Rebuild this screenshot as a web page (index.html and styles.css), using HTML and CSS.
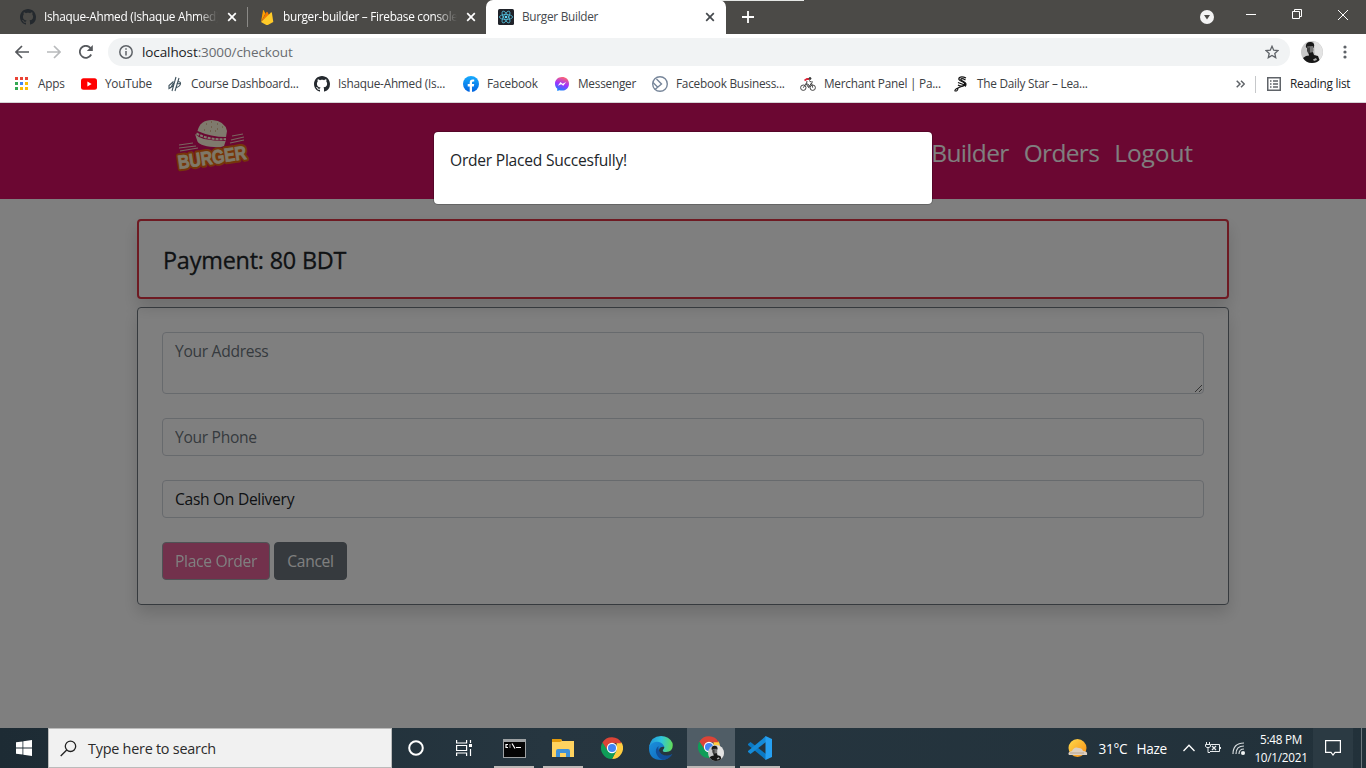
FILE: index.html
```html
<!DOCTYPE html>
<html lang="en">
<head>
<meta charset="utf-8">
<title>Burger Builder</title>
<link rel="stylesheet" href="styles.css">
</head>
<body>
<svg class="defs" width="0" height="0">
  <defs>
    <symbol id="github" viewBox="0 0 16 16"><path d="M8 0C3.58 0 0 3.58 0 8c0 3.54 2.29 6.53 5.47 7.59.4.07.55-.17.55-.38 0-.19-.01-.82-.01-1.49-2.01.37-2.53-.49-2.69-.94-.09-.23-.48-.94-.82-1.13-.28-.15-.68-.52-.01-.53.63-.01 1.08.58 1.23.82.72 1.21 1.87.87 2.33.66.07-.52.28-.87.51-1.07-1.78-.2-3.64-.89-3.64-3.95 0-.87.31-1.59.82-2.15-.08-.2-.36-1.02.08-2.12 0 0 .67-.21 2.2.82.64-.18 1.32-.27 2-.27s1.36.09 2 .27c1.53-1.04 2.2-.82 2.2-.82.44 1.1.16 1.92.08 2.12.51.56.82 1.27.82 2.15 0 3.07-1.87 3.75-3.65 3.95.29.25.54.73.54 1.48 0 1.07-.01 1.93-.01 2.2 0 .21.15.46.55.38A8.01 8.01 0 0 0 16 8c0-4.42-3.58-8-8-8z"/></symbol>
    <symbol id="close" viewBox="0 0 10 10"><path d="M1.2 1.2l7.6 7.6M8.8 1.2l-7.6 7.6" fill="none" stroke="currentColor" stroke-width="1.7"/></symbol>
    <symbol id="chrome" viewBox="0 0 24 24">
      <path d="M22.4 6A12 12 0 0 1 12 24l4.8-9.500L17 7.200V6z" fill="#ffcd40"/>
      <path d="M1.600 6A12 12 0 0 0 12 24l5-9-9-1z" fill="#0f9d58"/>
      <path d="M1.600 6A12 12 0 0 1 22.400 6.700H12L7.500 15z" fill="#db4437"/>
      <circle cx="12" cy="12" r="5.600" fill="#fff"/><circle cx="12" cy="12" r="4.400" fill="#4285f4"/>
    </symbol>
    <symbol id="portrait" viewBox="0 0 22 22">
      <circle cx="11" cy="11" r="11" fill="#c9c9c9"/><path d="M13 .2a11 11 0 0 1 5 19L14 13z" fill="#e3e3e3"/>
      <path d="M4.800 5.500Q5 1 9 1q4-.4 4.200 3.500L12.500 7H5.500z" fill="#191919"/><path d="M6 5.500l6-.5q1 4 0 6l-3 2Q6 10 6 5.500z" fill="#777"/>
      <path d="M6 6q2 1 3 0v6l2 1-3 1-2-4z" fill="#3e3e3e"/>
      <path d="M8 12l4-1 1 3 4 1 1.500 4q-2.500 3-7.500 3-6 0-9-5l3-2 3-.5z" fill="#171717"/><path d="M12 18.500l3-1.500 1 2-3 1z" fill="#aaa"/>
    </symbol>
    <linearGradient id="fb" x1="0" y1="0" x2="0" y2="1"><stop stop-color="#18acfe"/><stop offset="1" stop-color="#0163e0"/></linearGradient>
    <linearGradient id="ms" x1=".3" y1="1" x2=".6" y2="0"><stop stop-color="#0f87ff"/><stop offset=".5" stop-color="#a033ff"/><stop offset="1" stop-color="#ff6570"/></linearGradient>
    <linearGradient id="edge-top" x1="0" y1=".4" x2="1" y2=".5"><stop stop-color="#2196dc"/><stop offset=".5" stop-color="#2fc5dc"/><stop offset="1" stop-color="#62dc58"/></linearGradient>
    <linearGradient id="edge-low" x1="0" y1="0" x2="1" y2="1"><stop stop-color="#1c91dc"/><stop offset="1" stop-color="#0c62b8"/></linearGradient>
    <linearGradient id="sun" x1="0" y1="0" x2="1" y2="1"><stop stop-color="#ffdb4d"/><stop offset="1" stop-color="#f78c12"/></linearGradient>
  </defs>
</svg>

<div class="browser">
  <div class="tabstrip">
    <div class="tab tab-first">
      <svg class="i16" fill="#24292e"><use href="#github"/></svg>
      <span class="tab-title faded">Ishaque-Ahmed (Ishaque Ahmed)</span>
      <svg class="i10"><use href="#close"/></svg>
    </div>
    <div class="tab tab-second">
      <svg class="i16" viewBox="0 0 16 16"><path d="M2 13L4 1.400q.3-.8.8 0L6.500 4.500z" fill="#ffa000"/><path d="M2 13L7.500 3q.5-.7 1 0L10 6z" fill="#f57c00"/><path d="M2 13L12 3.500q.7-.5.9.3L14.300 13 8.800 16q-.8.300-1.500 0z" fill="#ffca28"/></svg>
      <span class="tab-title faded">burger-builder – Firebase console</span>
      <svg class="i10"><use href="#close"/></svg>
    </div>
    <div class="tab tab-active">
      <svg class="i16" viewBox="0 0 16 16"><rect width="16" height="16" rx="1.500" fill="#20232a"/><g fill="none" stroke="#53c1de" stroke-width=".8"><ellipse cx="8" cy="8" rx="6.600" ry="2.500"/><ellipse cx="8" cy="8" rx="6.600" ry="2.500" transform="rotate(60 8 8)"/><ellipse cx="8" cy="8" rx="6.600" ry="2.500" transform="rotate(120 8 8)"/></g><circle cx="8" cy="8" r="1.300" fill="#61dafb"/></svg>
      <span class="tab-title">Burger Builder</span>
      <svg class="i10"><use href="#close"/></svg>
    </div>
    <svg class="new-tab" viewBox="0 0 12 12"><path d="M6 0v12M0 6h12" stroke="#fff" stroke-width="1.800"/></svg>
    <div class="window-controls">
      <svg width="14" height="14" viewBox="0 0 14 14"><circle cx="7" cy="7" r="7" fill="#f3f3f3"/><path d="M4 5h6L7 9.500z" fill="#4b4a47"/></svg>
      <svg class="minimize" width="10" height="10"><path d="M0 4.500h10" stroke="#fff"/></svg>
      <svg class="restore" width="10" height="10" fill="none" stroke="#fff"><path d="M.5 2.500h7v7h-7zM2.500 2.500v-2h7v7h-2"/></svg>
      <svg class="exit" width="10" height="10" stroke="#fff"><path d="M0 0l10 10M10 0L0 10"/></svg>
    </div>
  </div>

  <div class="toolbar">
    <svg class="nav-icon" viewBox="0 0 14 14" fill="none" stroke="#56595d" stroke-width="1.700"><path d="M14 7H1.500M7 1L1 7l6 6"/></svg>
    <svg class="nav-icon" viewBox="0 0 14 14" fill="none" stroke="#b8babc" stroke-width="1.700"><path d="M0 7h12.500M7 1l6 6-6 6"/></svg>
    <svg class="nav-icon" viewBox="0 0 14 14"><path d="M12.200 9.500A6 6 0 1 1 11.300 2.800L12.500 4" fill="none" stroke="#56595d" stroke-width="1.800"/><path d="M13.800 0v6H7.800z" fill="#56595d"/></svg>
    <div class="omnibox">
      <svg width="14" height="14" viewBox="0 0 14 14" fill="none" stroke="#5f6368" stroke-width="1.500"><circle cx="7" cy="7" r="6.200"/><path d="M7 6v4.500M7 3.300v1.500"/></svg>
      <span class="url"><b>localhost</b>:3000/checkout</span>
      <svg width="14" height="14" viewBox="0 0 14 14" fill="none" stroke="#5f6368" stroke-width="1.300"><path d="M7 1.300l1.700 3.900 4.300.4-3.200 2.800.9 4.200L7 10.400l-3.700 2.200.9-4.200L1 5.600l4.300-.4z"/></svg>
    </div>
    <svg class="avatar"><use href="#portrait"/></svg>
    <svg class="dots" width="4" height="14" fill="#5f6368"><circle cx="2" cy="2" r="1.600"/><circle cx="2" cy="7" r="1.600"/><circle cx="2" cy="12" r="1.600"/></svg>
  </div>

  <div class="bookmarks">
    <div class="bookmark"><svg class="i16" viewBox="0 0 16 16"><path fill="#ea4335" d="M1 1h3v3H1zM6 1h3v3H6zM11 1h3v3h-3z"/><path fill="#34a853" d="M1 6h3v3H1zM1 11h3v3H1z"/><path fill="#4285f4" d="M6 6h3v3H6z"/><path fill="#fbbc05" d="M11 6h3v3h-3zM6 11h3v3H6zM11 11h3v3h-3z"/></svg><span>Apps</span></div>
    <div class="bookmark"><svg class="i16" viewBox="0 0 16 16"><rect y="2.300" width="16" height="11.400" rx="2.500" fill="#f00"/><path d="M6.400 5.600v4.800L10.600 8z" fill="#fff"/></svg><span>YouTube</span></div>
    <div class="bookmark"><svg class="i16" viewBox="0 0 16 16" fill="none" stroke="#41545f" stroke-width="1.100"><path d="M9 1L5 15M6.500 5.500L2 9.500v3l4-2.500M3.500 12l3-5M12 2L8 15M10.500 5.500q3.500 0 3 2.500t-5 4M9.500 8l3.500-.5"/></svg><span>Course Dashboard...</span></div>
    <div class="bookmark"><svg class="i16" fill="#24292e"><use href="#github"/></svg><span>Ishaque-Ahmed (Is...</span></div>
    <div class="bookmark"><svg class="i16" viewBox="0 0 16 16"><circle cx="8" cy="8" r="8" fill="url(#fb)"/><path d="M6.700 16v-5.500h-2V8h2V6.400q0-3 2.900-3 .9 0 1.600.2v2h-1.100q-1.100 0-1.100 1.100V8h2.200l-.4 2.500H9V16z" fill="#fff"/></svg><span>Facebook</span></div>
    <div class="bookmark"><svg class="i16" viewBox="0 0 16 16"><path d="M8 1C4 1 1 3.900 1 7.700c0 2 .8 3.700 2.200 4.900l.1 2.400 2-.8q1.300.4 2.700.4c4 0 7-2.900 7-6.900S12 1 8 1z" fill="url(#ms)"/><path d="M3.800 9.700L6.500 6l2.100 1.700L12.100 6 9.300 9.700 7.200 8.200z" fill="#fff"/></svg><span>Messenger</span></div>
    <div class="bookmark"><svg class="i16" viewBox="0 0 16 16" fill="none" stroke="#77869a" stroke-width="1.400"><circle cx="8" cy="8" r="7.300"/><path d="M4.500 3L9.500 8 3 13.500M1 6.500L5.500 11"/></svg><span>Facebook Business...</span></div>
    <div class="bookmark"><svg class="i16" viewBox="0 0 16 16" fill="none" stroke="#444" stroke-width="1"><circle cx="3.300" cy="11.700" r="2.700"/><circle cx="12.700" cy="11.700" r="2.700"/><path d="M3.300 11.700L6 7.500l2.500 4 3-4.500 1.200 4.700M7 5L6.500 7.500 9 9v2.500M9 4.500l2 1.500h2"/><path d="M4.500 4.500L7 3h2" stroke="#dc2638" stroke-width="1.800"/><circle cx="10" cy="2.500" r="1" fill="#222"/></svg><span>Merchant Panel | Pa...</span></div>
    <div class="bookmark"><svg class="i16" viewBox="0 0 16 16" fill="none" stroke="#111"><path d="M13 2Q9 0 6.500 1.500 4.500 4 9 5.500q4 1.500 2 4-3 1.500-6-.5" stroke-width="1.300"/><path d="M12.500 4Q9 2 8 3q-1 1 2.500 2.500 4 2 1.500 5M5 6.500l8 3" stroke-width="1.300"/><path d="M12.500 9L6 11.500q-5 2-4 3.500 2.500.5 3-2.500" stroke-width="1.100"/></svg><span>The Daily Star – Lea...</span></div>
    <svg class="more" width="9" height="8" viewBox="0 0 9 8" fill="none" stroke="#5f6368" stroke-width="1.500"><path d="M.7.7L4 4 .7 7.300M5 .7L8.300 4 5 7.300"/></svg>
    <div class="reading"><svg width="14" height="14" viewBox="0 0 14 14" fill="none" stroke="#5f6368"><rect x=".75" y=".75" width="12.500" height="12.500" stroke-width="1.500"/><path stroke-width="1.300" d="M3 4h1.500M6 4h5M3 7h1.500M6 7h5M3 10h1.500M6 10h5"/></svg><span>Reading list</span></div>
  </div>
</div>

<main class="page">
  <header class="navbar">
    <svg class="logo" viewBox="0 0 76 56">
      <g fill="#fff4db"><path d="M22.500 14Q25 3 37 3q13 1 15 11l-1 6q-15 0-28.500-6z"/><path d="M20 17q4 4 9 5 10 2 21 2l1-1-2 6q-4 2-10 1-16-1-17-7z"/></g>
      <path d="M21.500 16.500q13 7 29.500 5.500" fill="none" stroke="#fff4db" stroke-width="2" stroke-dasharray="3 1"/>
      <path d="M31 7h1m4-2h1m5 2h1m-7 3h1m5 2h1m4-2h1m-19 3h1m5 1h1m4 0h1" stroke="#c9905c"/>
      <path d="M4 28l14-2M4 31l17-2M5 34l18-3M57 19l11-2M56 23l13-3M55 26l14-3" stroke="#f4c9bf" stroke-width="1.200"/>
      <text class="logo-outline" x="4" y="52" textLength="69" lengthAdjust="spacingAndGlyphs" transform="rotate(-8.500 4 52)">BURGER</text>
      <text class="logo-word" x="4" y="52" textLength="69" lengthAdjust="spacingAndGlyphs" transform="rotate(-8.500 4 52)">BURGER</text>
    </svg>
    <nav class="links"><a>Builder</a><a>Orders</a><a class="logout">Logout</a></nav>
  </header>
  <section class="content">
    <div class="card payment"><h4>Payment: 80 BDT</h4></div>
    <form class="card form">
      <textarea class="field" placeholder="Your Address"></textarea>
      <input class="field" placeholder="Your Phone">
      <div class="field">Cash On Delivery</div>
      <div class="actions"><button type="button" class="btn place">Place Order</button><button type="button" class="btn cancel">Cancel</button></div>
    </form>
  </section>
  <div class="backdrop"><div class="modal">Order Placed Succesfully!</div></div>
</main>

<footer class="taskbar">
  <div class="start"><svg width="16" height="16" fill="#fff"><path d="M0 2.300l6.500-.9v6.200H0zM7.300 1.300L16 0v7.600H7.300zM0 8.400h6.500v6.200L0 13.700zM7.300 8.400H16V16l-8.700-1.300z"/></svg></div>
  <div class="search"><svg width="17" height="17" fill="none" stroke="#222" stroke-width="1.300"><circle cx="10.500" cy="6.300" r="5.200"/><path d="M6.700 10L.7 16"/></svg><span>Type here to search</span></div>
  <div class="task"><svg width="16" height="16" fill="none" stroke="#fff" stroke-width="2"><circle cx="8" cy="8" r="6.800"/></svg></div>
  <div class="task view"><svg width="16" height="16" fill="none" stroke="#fff" stroke-width="1.200"><path d="M.6 0v3h10V0M.6 16v-3h10v3M.6 5.500h10v5H.6zM14.500 0v3M14.500 9v7"/><path d="M13 4h3v3h-3z" fill="#fff" stroke="none"/></svg></div>
  <div class="task open"><svg width="23" height="19"><path fill="#9ea2a4" d="M0 0h23v19H0z"/><path d="M1 3h21v15H1z" fill="#050505"/><path d="M5 5.500H3v3h2M7 5.500v1m0 1v1M9 4.500l3 5M13 8.500h5" fill="none" stroke="#fff" stroke-width="1.200"/></svg></div>
  <div class="task open"><svg width="22" height="18"><path d="M0 0h9l1 2h12v16H0z" fill="#ffd35f"/><path d="M0 0h9l1 2-2 1H0z" fill="#e39a0b"/><path d="M4 18v-6q0-2 2-2h10q2 0 2 2v6h-4v-4H8v4z" fill="#3f91d8"/></svg></div>
  <div class="task"><svg width="22" height="22"><use href="#chrome"/></svg></div>
  <div class="task"><svg width="24" height="24" viewBox="0 0 24 24"><path d="M0 12Q0 5 8 5q7 0 8 6-5-1-6 3-1 6 5 7 4 1 8-3-4 6-11 6Q0 24 0 12z" fill="url(#edge-low)"/><path d="M9.500 10q-4 3-2 8 2 5 7 6 6-1 9-6-6 3-11 0-4-4-3-8z" fill="#124e99"/><path d="M0 11Q2 0 12 0q8 0 11.500 7Q25 16 17 16q-4 0-3-2 2-2 1-4Q12 5 6 6q-4 1-6 5z" fill="url(#edge-top)"/></svg></div>
  <div class="task open current"><svg width="26" height="25"><use href="#chrome" width="22" height="22"/><use href="#portrait" x="10" y="9" width="16" height="16"/></svg></div>
  <div class="task open"><svg width="24" height="24"><path d="M0 8l2.500-2L18 18v6L0 9z" fill="#0b79c4"/><path d="M0 16l2.500 2L18 6V0L0 15z" fill="#158bd8"/><path d="M17.500 0L24 3v18l-6.500 3z" fill="#26a0f2"/></svg></div>
  <div class="tray">
    <svg class="weather" width="20" height="19"><circle cx="9.500" cy="9" r="9" fill="url(#sun)"/><path d="M1 16q-2-3 3-4 2-5 7-3 3 0 4 3 5 0 4 4z" fill="#dccfc0"/><path d="M2 14h14" stroke="#b9a58f"/></svg>
    <span class="temp">31°C</span><span class="haze">Haze</span>
    <svg class="chev" width="12" height="8" fill="none" stroke="#fff" stroke-width="1.300"><path d="M.5 7L6 1.200 11.500 7"/></svg>
    <svg class="battery" width="16" height="12" fill="none" stroke="#e8ecee"><path d="M6 2.500h8.500v7H5M15.500 5v2M1.500 0v2M4.500 0v2M.5 2.500h5v2l-1.500 1H2l-1.500-1zM3 6v4.500h2"/><path d="M7 4l4 4M11 4L7 8" stroke-width="1.200"/></svg>
    <svg class="wifi" width="13" height="13" fill="none" stroke="#d5dadc" stroke-width="1.200"><path d="M1 12Q1 1 12 1M4 12q0-8 8-8M7 12q0-5 5-5"/><circle cx="11" cy="11" r="1.500" fill="#fff"/></svg>
    <div class="clock"><span>5:48 PM</span><span class="date">10/1/2021</span></div>
    <div class="notify"><svg width="16" height="16" fill="none" stroke="#fff" stroke-width="1.200"><path d="M.6.6h14.800v11.800H10L8 15l-2-2.600H.6z"/></svg></div>
    <div class="peek"></div>
  </div>
</footer>
</body>
</html>
```
FILE: styles.css
```css
* { box-sizing: border-box; }
body { margin: 0; width: 1366px; height: 768px; overflow: hidden; font-family: "Open Sans", "Noto Sans", sans-serif; font-size: 15.6px; letter-spacing: -.24px; color: #212529; display: flex; flex-direction: column; }
svg { display: block; flex: none; }
.defs { position: absolute; }
.i16 { width: 16px; height: 16px; }
.i10 { width: 10px; height: 10px; }

.browser { height: 103px; flex: none; background: #fff; border-bottom: 1px solid #d5d3d6; font-size: 11.8px; color: #3c4043; white-space: nowrap; }
.tabstrip { height: 34px; background: linear-gradient(90deg, transparent 563px, #e5e7e5 563px 659px, transparent 659px 707px, #e5e7e5 707px 804px, transparent 804px) 0 0 / 100% 1px no-repeat #4b4a47; display: flex; align-items: center; }
.tab { display: flex; align-items: center; height: 34px; color: #fff; }
.tab-first { width: 248px; padding-left: 20px; background: linear-gradient(#8b8a87, #8b8a87) 100% 50% / 1px 20px no-repeat; }
.tab-second { width: 238px; padding-left: 11px; }
.tab-title { width: 174px; margin: 0 9px 0 8px; padding-bottom: 2px; overflow: hidden; letter-spacing: -.28px; }
.faded { -webkit-mask-image: linear-gradient(90deg, #000 88%, transparent); mask-image: linear-gradient(90deg, #000 88%, transparent); }
.tab-active { width: 240px; height: 34px; padding-left: 12px; background: #fff; color: #45494d; border-radius: 7px 7px 0 0; }
.new-tab { width: 12px; height: 12px; margin-left: 16px; }
.window-controls { flex: 1; display: flex; align-items: center; justify-content: flex-end; padding-right: 18px; }
.minimize { margin: -5px 0 0 32px; }
.restore { margin: -7px 0 0 36px; }
.exit { margin: -5px 0 0 36px; }

.toolbar { height: 36px; display: flex; align-items: center; padding-left: 15px; }
.nav-icon { width: 14px; height: 14px; margin-right: 18px; }
.omnibox { width: 1182px; height: 28px; margin-left: -3px; border-radius: 14px; background: #f1f3f4; display: flex; align-items: center; padding: 0 11px; }
.url { flex: 1; margin-left: 9px; font-size: 13.5px; letter-spacing: -.1px; color: #686c70; }
.url b { font-weight: 400; color: #202124; }
.avatar { width: 22px; height: 22px; margin-left: 11px; }
.dots { margin-left: 20px; }

.bookmarks { height: 28px; display: grid; grid-template-columns: 67px 86px 147px 149px 91px 98px 148px 153px 283px 19px 96px; align-items: center; padding-left: 14px; }
.bookmark { display: flex; align-items: center; gap: 8px; }
.bookmark span, .reading span { padding-bottom: 2px; }
.reading { height: 17px; display: flex; align-items: center; gap: 9px; padding-left: 11px; border-left: 1px solid #c6c8ca; color: #202124; }

.page { position: relative; height: 625px; flex: none; background: #fff; overflow: hidden; }
.navbar { height: 96px; background: #d70f64; display: flex; justify-content: space-between; align-items: center; padding: 0 173px 0 175px; }
.logo { width: 76px; height: 56px; margin-top: -12px; overflow: visible; }
.logo text { font: bold 19px "Liberation Sans", sans-serif; letter-spacing: 0; }
.logo-outline { fill: #fff1d0; stroke: #ed6a13; stroke-width: 5px; stroke-linejoin: round; }
.logo-word { fill: #fff1d0; stroke: #fff1d0; stroke-width: .8px; }
.links { display: flex; gap: 15px; font-size: 24.5px; letter-spacing: -.65px; color: #fff; padding-top: 3px; }
.logout { letter-spacing: -.1px; }
.content { width: 1092px; margin: 20px auto 0; }
.card { border-radius: 4px; box-shadow: 0 8px 16px rgba(0, 0, 0, .15); }
.payment { height: 80px; border: 2px solid #dc3545; padding: 25px 24px; }
.payment h4 { margin: 0; font-size: 23.4px; letter-spacing: -.2px; line-height: 29px; font-weight: 500; -webkit-text-stroke: .3px #212529; }
.form { height: 298px; margin-top: 8px; border: 1px solid #6c757d; padding: 24px; display: flex; flex-direction: column; gap: 24px; }
.field { height: 38px; border: 1px solid #ced4da; border-radius: 4px; background: #fff; padding: 6px 12px; font: 15.6px/24px "Open Sans", sans-serif; letter-spacing: -.3px; color: #212529; display: block; width: 100%; }
textarea.field { height: 62px; flex: none; }
.field::placeholder { color: #6c757d; opacity: 1; }
.actions { display: flex; gap: 4px; }
.btn { height: 38px; border: 1px solid #6c757d; border-radius: 4px; padding: 0; font: 15.6px/24px "Open Sans", sans-serif; letter-spacing: -.3px; color: #fff; background: #6c757d; }
.place { width: 108px; background: #d70f64; opacity: .65; }
.cancel { width: 73px; }
.backdrop { position: absolute; inset: 0; background: rgba(0, 0, 0, .5); padding-top: 28px; }
.modal { width: 500px; height: 74px; margin: 0 auto; border: 1px solid rgba(0, 0, 0, .2); border-radius: 5px; background: #fff; background-clip: padding-box; padding: 16px; line-height: 24px; }

.taskbar { height: 40px; flex: none; background: linear-gradient(90deg, #1d2b34, #263640 40%, #22313a); display: flex; white-space: nowrap; }
.start { width: 48px; display: flex; align-items: center; justify-content: center; }
.search { width: 344px; background: #f1f1f1; border: 1px solid #bbb; display: flex; align-items: center; gap: 11px; padding-left: 11px; font-size: 14.4px; color: #2b2b2b; }
.task { width: 48px; margin-right: 1.1px; display: flex; align-items: center; justify-content: center; }
.view { padding-right: 3px; }
.open { background: linear-gradient(#bdb9b7, #bdb9b7) 50% 100% / 40px 2px no-repeat; }
.current { background: linear-gradient(#bdb9b7, #bdb9b7) 50% 100% / 48px 2px no-repeat #505d66; }
.tray { flex: 1; display: flex; align-items: center; justify-content: flex-end; color: #fff; font-size: 13.6px; }
.temp { margin-left: 10px; }
.haze { margin-left: 9px; }
.chev { margin-left: 16px; }
.battery { margin-left: 10px; }
.wifi { margin-left: 11px; }
.clock { width: 64px; display: flex; flex-direction: column; align-items: center; font-size: 11.7px; line-height: 18px; margin-left: 4px; }
.notify { width: 40px; height: 40px; background: #2b3a43; display: flex; align-items: center; justify-content: center; }
.peek { width: 13px; height: 40px; background: linear-gradient(90deg, transparent 8px, #6d787e 8px 9px, transparent 9px); }
```
